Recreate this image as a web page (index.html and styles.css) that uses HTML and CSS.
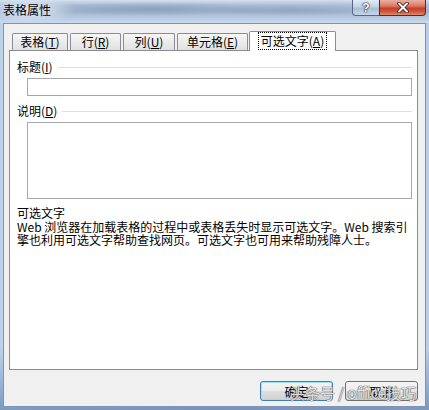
FILE: index.html
```html
<!DOCTYPE html>
<html lang="zh-CN">
<head>
<meta charset="utf-8">
<title>表格属性</title>
<link rel="stylesheet" href="styles.css">
</head>
<body>
<div class="window">
  <div class="titlebar">
    <span class="title">表格属性</span>
    <div class="caption-btns">
      <div class="cap help">?</div>
      <div class="cap close">
        <svg width="14" height="11" viewBox="0 0 14 11">
          <path d="M3 1.5 L11 9.5 M11 1.5 L3 9.5" stroke="#3a1a14" stroke-width="3.6" stroke-linecap="round"/>
          <path d="M3 1.5 L11 9.5 M11 1.5 L3 9.5" stroke="#ffffff" stroke-width="2" stroke-linecap="round"/>
        </svg>
      </div>
    </div>
  </div>
  <div class="body">
    <div class="tabs">
      <div class="tab t1">表格(<u>T</u>)</div>
      <div class="tab t2">行(<u>R</u>)</div>
      <div class="tab t3">列(<u>U</u>)</div>
      <div class="tab t4">单元格(<u>E</u>)</div>
      <div class="tab active t5"><span class="focus">可选文字(<u>A</u>)</span></div>
    </div>
    <div class="panel">
      <div class="group-label"><span>标题(<u>I</u>)</span><span class="rule"></span></div>
      <input class="field" type="text">
      <div class="group-label second"><span>说明(<u>D</u>)</span><span class="rule"></span></div>
      <textarea class="field area"></textarea>
      <div class="section">可选文字</div>
      <p class="desc">
        <span class="line">Web 浏览器在加载表格的过程中或表格丢失时显示可选文字。Web 搜索引</span>
        <span class="line">擎也利用可选文字帮助查找网页。可选文字也可用来帮助残障人士。</span>
      </p>
    </div>
    <div class="buttons">
      <button class="btn default">确定</button>
      <button class="btn">取消</button>
    </div>
  </div>
  <div class="watermark">头条号 / office技巧</div>
</div>
</body>
</html>
```
FILE: styles.css
```css
html, body {
  margin: 0;
  padding: 0;
  background: #ffffff;
}

body {
  font-family: "Noto Sans CJK SC", "Liberation Sans", sans-serif;
  font-size: 12px;
  color: #000;
}

.window {
  position: relative;
  width: 429px;
  height: 410px;
  box-sizing: border-box;
  padding: 0 3px 3px 3px;
  display: flex;
  flex-direction: column;
  background:
    linear-gradient(180deg, rgba(0,0,0,0) 85%, rgba(70,110,165,0.55) 100%),
    linear-gradient(90deg, #bcd2ea 0%, #a9c2e0 50%, #b8cde6 100%);
  overflow: hidden;
}

.titlebar {
  height: 23px;
  display: flex;
  justify-content: space-between;
  align-items: flex-start;
  margin: 0 -3px;
  background:
    radial-gradient(ellipse 46px 13px at 30px 10px, rgba(232,240,250,0.95), rgba(232,240,250,0) 100%),
    radial-gradient(ellipse 120px 7px at 150px 9px, rgba(110,130,160,0.45), rgba(110,130,160,0) 100%),
    radial-gradient(ellipse 90px 6px at 290px 10px, rgba(110,130,160,0.35), rgba(110,130,160,0) 100%),
    linear-gradient(180deg, #d2e0f0 0px, #aebfd6 5px, #a2b7d2 12px, #b4c7df 17px, #c9daed 23px);
}

.title {
  padding-left: 3px;
  line-height: 20px;
  font-size: 12px;
  color: #000;
}

.caption-btns {
  display: flex;
  margin-right: 3px;
}

.cap {
  height: 16px;
  box-sizing: border-box;
  display: flex;
  align-items: center;
  justify-content: center;
}

.help {
  width: 27px;
  border: 1px solid #56677f;
  border-top: none;
  border-right: none;
  border-radius: 0 0 0 4px;
  background: linear-gradient(180deg, #e3ebf5 0%, #c3d2e4 45%, #a9bdd6 55%, #c6d7eb 100%);
  color: #ffffff;
  font-weight: bold;
  font-size: 12px;
  font-family: "Liberation Sans", sans-serif;
  text-shadow: 0 0 1px #1f2b3d, 0 0 1px #1f2b3d, 0 0 2px #1f2b3d;
}

.close {
  width: 47px;
  border: 1px solid #5a2a22;
  border-top: none;
  border-radius: 0 0 4px 0;
  background: linear-gradient(180deg, #e9b0a3 0%, #dc7a63 40%, #c5402b 55%, #cf5a40 80%, #e38a6e 100%);
}

.body {
  flex: 1;
  display: flex;
  flex-direction: column;
  background: #f0f0f0;
  border: 1px solid #8094ad;
  padding: 0 7px 5px 5px;
}

.tabs {
  height: 26px;
  display: flex;
  align-items: flex-end;
  padding-left: 3px;
  position: relative;
  z-index: 1;
}

.tab {
  height: 17px;
  box-sizing: border-box;
  margin-right: 2px;
  border: 1px solid #898c95;
  border-bottom: none;
  border-radius: 2px 2px 0 0;
  background: linear-gradient(180deg, #f6f6f6 0%, #ebebeb 50%, #e1e1e1 100%);
  display: flex;
  align-items: center;
  justify-content: center;
  font-size: 12px;
  line-height: 14px;
  white-space: nowrap;
}

.t1 { width: 56px; }
.t2 { width: 51px; }
.t3 { width: 52px; }
.t4 { width: 71px; }

.tab.active {
  width: 87px;
  height: 20px;
  margin-left: -1px;
  margin-bottom: -1px;
  background: #ffffff;
  padding-bottom: 2px;
}

.focus {
  outline: 1px dotted #000;
  outline-offset: 1px;
  padding: 0 1px;
}

.panel {
  flex: 1;
  background: #ffffff;
  border: 1px solid #898c95;
  padding: 9px 5px 0 7px;
}

.group-label {
  display: flex;
  align-items: center;
  height: 14px;
  line-height: 14px;
  gap: 5px;
}

.group-label.second {
  margin-top: 8px;
}

.rule {
  flex: 1;
  border-top: 1px solid #dcdfe3;
  margin-top: 1px;
}

.field {
  display: block;
  box-sizing: border-box;
  width: calc(100% - 10px);
  margin: 4px 0 0 10px;
  height: 18px;
  border: 1px solid #a5a7ab;
  background: #ffffff;
  padding: 0;
  outline: none;
  resize: none;
  font: inherit;
}

.field.area {
  height: 77px;
}

.section {
  margin-top: 7px;
  line-height: 14px;
}

.desc {
  margin: 0;
  line-height: 13px;
  font-size: 12px;
}

.line {
  display: block;
  white-space: nowrap;
}

.buttons {
  display: flex;
  justify-content: flex-end;
  gap: 12px;
  margin-top: 11px;
}

.btn {
  width: 73px;
  height: 20px;
  box-sizing: border-box;
  padding: 0;
  border: 1px solid #707070;
  border-radius: 3px;
  background: linear-gradient(180deg, #f4f4f4 0%, #ececec 48%, #dedede 52%, #d0d0d0 100%);
  font-family: "Noto Sans CJK SC", sans-serif;
  font-size: 12px;
  color: #000;
}

.btn.default {
  border-color: #3c7fb1;
  box-shadow: inset 0 0 0 1px #9fdff6;
}

.watermark {
  position: absolute;
  left: 290px;
  top: 383px;
  font-size: 15px;
  line-height: 20px;
  color: rgba(245, 245, 245, 0.85);
  text-shadow: 0 0 1px #6a6a6a, 0 0 1px #6a6a6a, 0 0 1px #6a6a6a;
  white-space: nowrap;
  pointer-events: none;
}
```
